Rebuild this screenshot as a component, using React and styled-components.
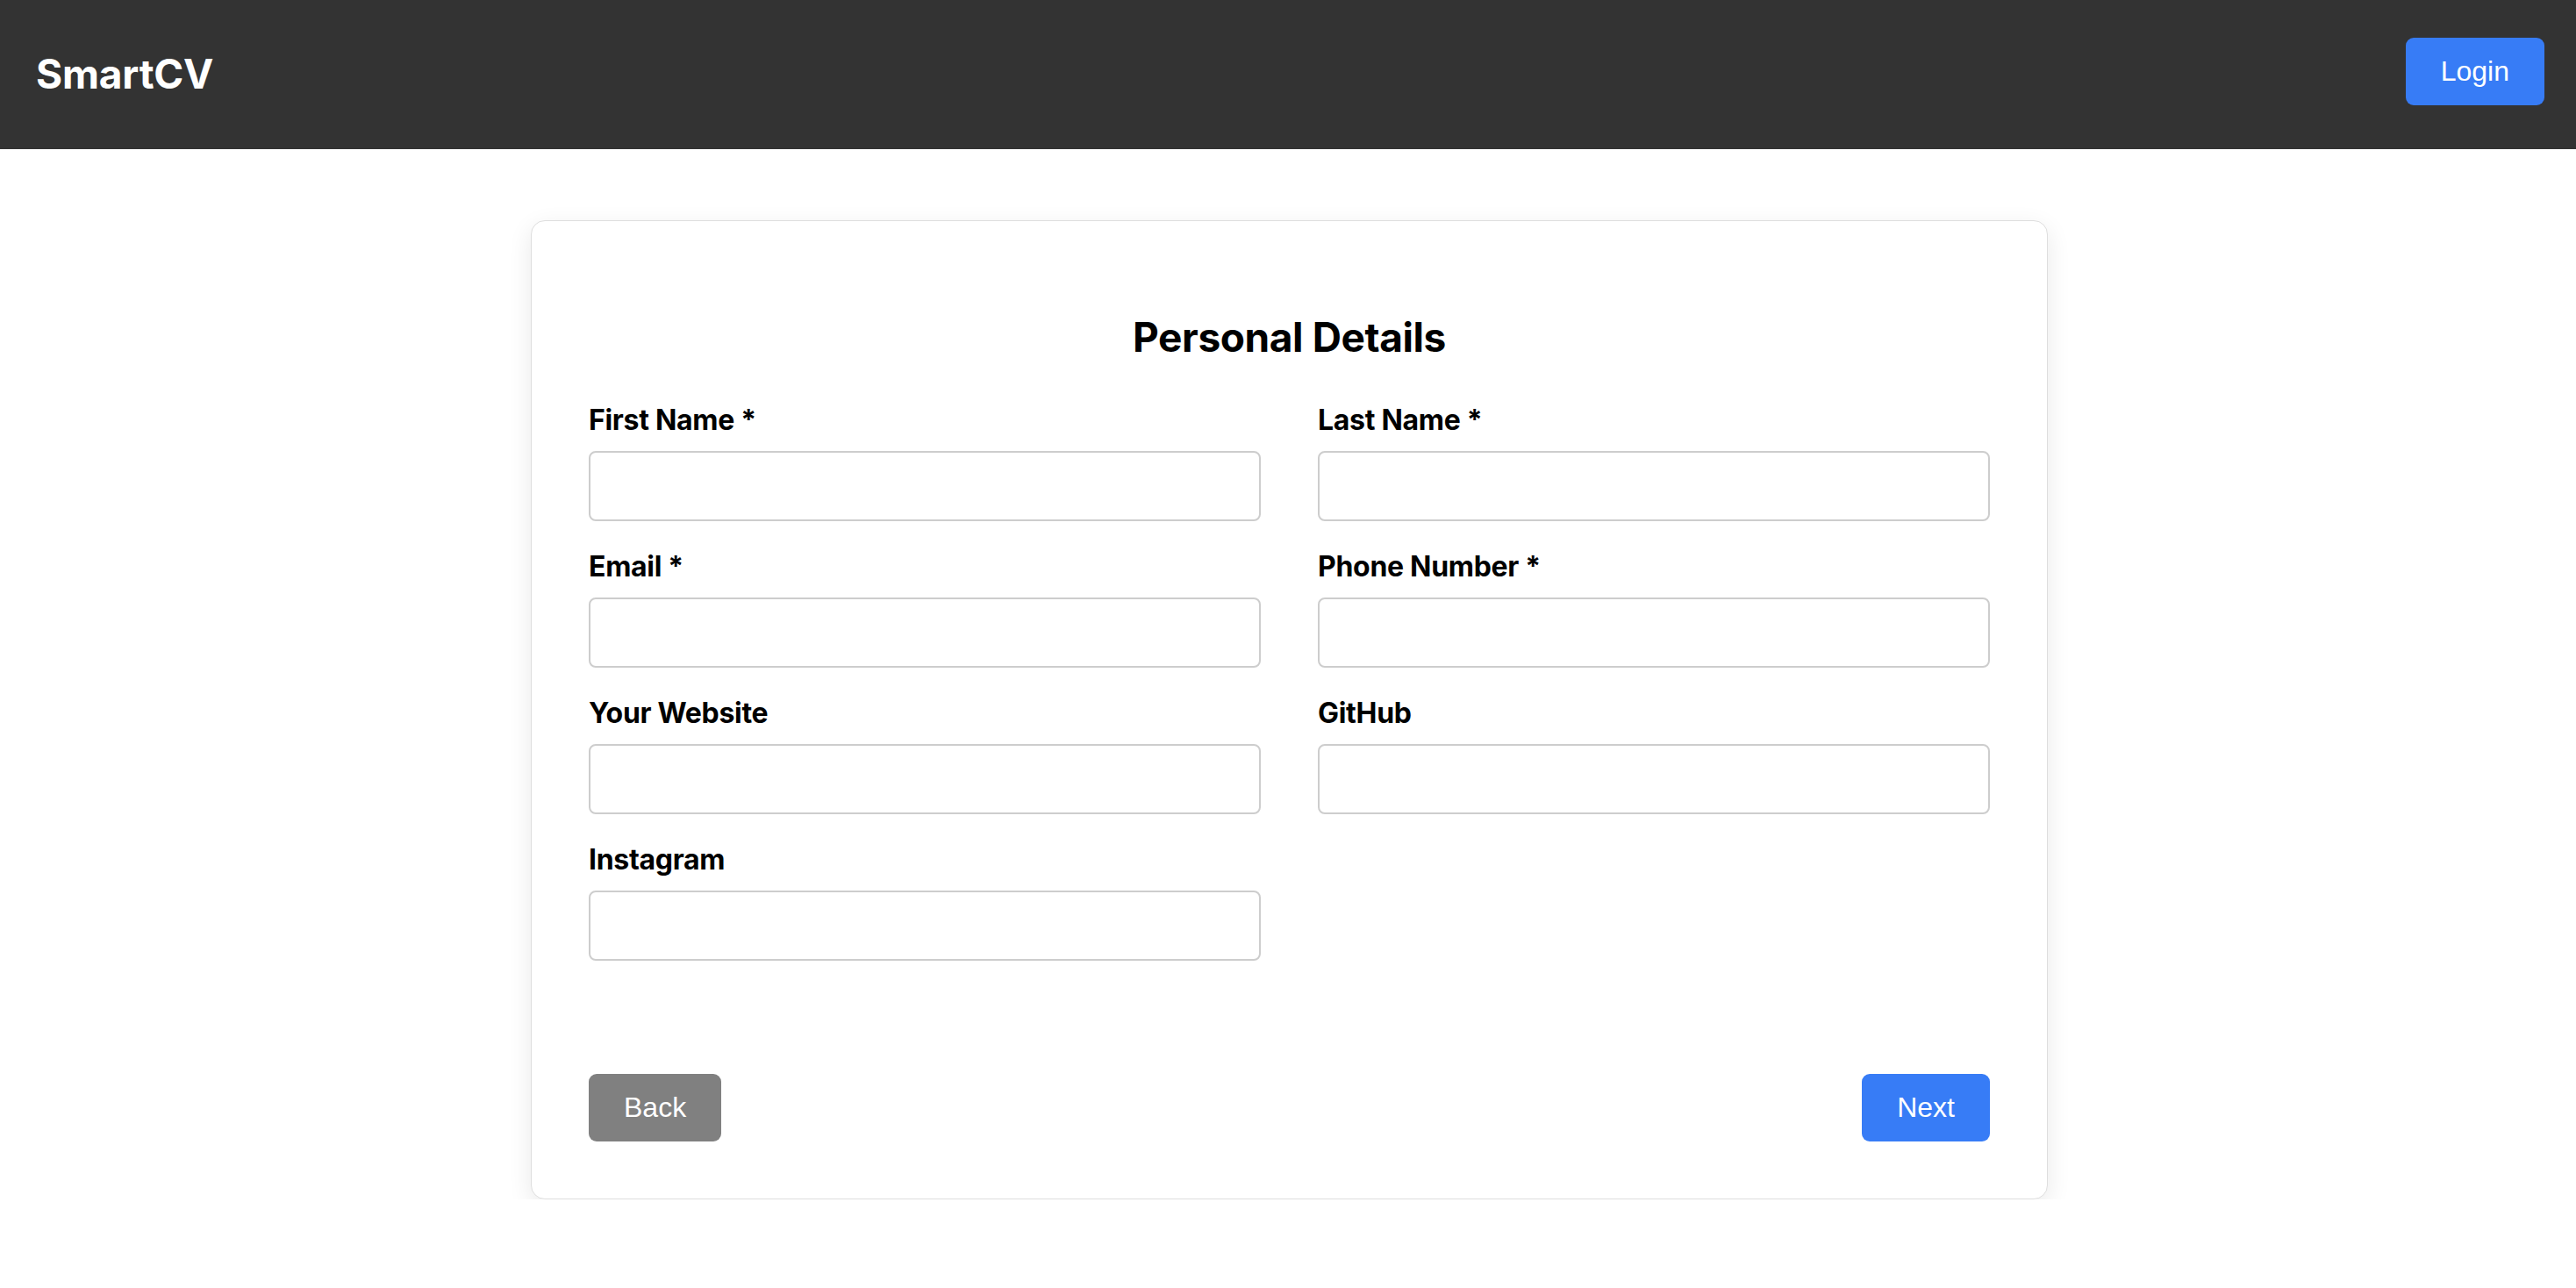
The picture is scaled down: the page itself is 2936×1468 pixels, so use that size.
import React from 'react'
import styled, { createGlobalStyle } from 'styled-components'

const GlobalStyle = createGlobalStyle`
  * {
    box-sizing: border-box;
  }
  body {
    margin: 0;
    background: #fff;
    font-family: Inter, 'Liberation Sans', sans-serif;
    color: #000;
  }
`

const Nav = styled.header`
  background: #333;
  height: 170px;
  display: flex;
  justify-content: space-between;
  align-items: center;
  padding: 0 36px 0 41px;
`

const Logo = styled.div`
  color: #fff;
  font-size: 46px;
  font-weight: 700;
  letter-spacing: -0.2px;
  margin-top: -2px;
`

const Button = styled.button`
  font-family: 'Liberation Sans', Arial, sans-serif;
  font-size: 32px;
  color: #fff;
  border: none;
  border-radius: 9px;
  padding: 20px 40px;
  background: ${({ variant }) => (variant === 'grey' ? '#808080' : '#377cf6')};
  cursor: pointer;
`

const LoginButton = styled(Button)`
  margin-top: -7px;
`

const Main = styled.main`
  display: flex;
  justify-content: center;
  padding-top: 81px;
`

const Card = styled.div`
  width: 1729px;
  flex-shrink: 0;
  margin-left: 3px;
  background: #fff;
  border: 1px solid #dedede;
  border-radius: 16px;
  box-shadow: 0 8px 28px rgba(0, 0, 0, 0.09);
  padding: 65px;
`

const Title = styled.h2`
  margin: 39px 0 47px;
  text-align: center;
  font-size: 46px;
  font-weight: 700;
  letter-spacing: -0.4px;
`

const FieldGrid = styled.div`
  display: grid;
  grid-template-columns: 1fr 1fr;
  column-gap: 65px;
  row-gap: 32px;
`

const Field = styled.div`
  display: flex;
  flex-direction: column;
`

const Label = styled.label`
  font-size: 32px;
  font-weight: 700;
  letter-spacing: -0.3px;
  margin-bottom: 16px;
`

const Input = styled.input`
  height: 80px;
  border: 2px solid #cdcdcd;
  border-radius: 8px;
  padding: 0 20px;
  font-size: 30px;
  font-family: inherit;
`

const Actions = styled.div`
  display: flex;
  justify-content: space-between;
  margin-top: 129px;
`

const fields = [
  'First Name *',
  'Last Name *',
  'Email *',
  'Phone Number *',
  'Your Website',
  'GitHub',
  'Instagram',
]

const App = () => {
  return (
    <>
      <GlobalStyle />
      <Nav>
        <Logo>SmartCV</Logo>
        <LoginButton>Login</LoginButton>
      </Nav>
      <Main>
        <Card>
          <Title>Personal Details</Title>
          <FieldGrid>
            {fields.map((f) => (
              <Field key={f}>
                <Label>{f}</Label>
                <Input type='text' />
              </Field>
            ))}
          </FieldGrid>
          <Actions>
            <Button variant='grey'>Back</Button>
            <Button>Next</Button>
          </Actions>
        </Card>
      </Main>
    </>
  )
}

export default App
